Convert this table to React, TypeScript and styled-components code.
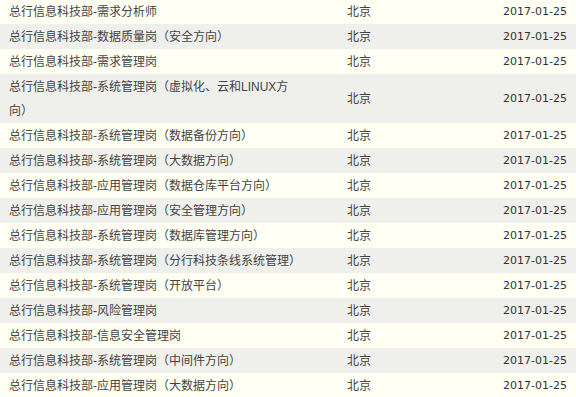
import styled, { createGlobalStyle } from 'styled-components'

const GlobalStyle = createGlobalStyle`
    body {
        margin: 0;
        background: #fffff4;
        font-family: "Liberation Sans", "Noto Sans CJK SC", sans-serif;
        font-size: 12px;
        color: #444;
    }
`

const JobList = styled.div`
    width: 576px;
`

const JobRow = styled.div<{ $odd: boolean }>`
    display: grid;
    grid-template-columns: 338px 1fr 120px;
    align-items: center;
    padding-top: 1px;
    background: ${props => props.$odd ? '#efefeb' : '#fffff4'};
    &:first-child {
        padding-top: 0;
    }
`

const Title = styled.div`
    padding-left: 9px;
    max-width: 290px;
    line-height: 24px;
`

const City = styled.div`
    padding-left: 9px;
    line-height: 24px;
`

const Date = styled.div`
    padding-right: 9px;
    text-align: right;
    line-height: 24px;
    font-family: "DejaVu Sans", sans-serif;
    font-size: 11px;
    color: #333;
`

const jobs = [
    '总行信息科技部-需求分析师',
    '总行信息科技部-数据质量岗（安全方向）',
    '总行信息科技部-需求管理岗',
    '总行信息科技部-系统管理岗（虚拟化、云和LINUX方向）',
    '总行信息科技部-系统管理岗（数据备份方向）',
    '总行信息科技部-系统管理岗（大数据方向）',
    '总行信息科技部-应用管理岗（数据仓库平台方向）',
    '总行信息科技部-应用管理岗（安全管理方向）',
    '总行信息科技部-系统管理岗（数据库管理方向）',
    '总行信息科技部-系统管理岗（分行科技条线系统管理）',
    '总行信息科技部-系统管理岗（开放平台）',
    '总行信息科技部-风险管理岗',
    '总行信息科技部-信息安全管理岗',
    '总行信息科技部-系统管理岗（中间件方向）',
    '总行信息科技部-应用管理岗（大数据方向）',
]

function App() {
    return (
        <>
            <GlobalStyle />
            <JobList>
                {jobs.map((job, i) => (
                    <JobRow key={i} $odd={i % 2 === 1}>
                        <Title>{job}</Title>
                        <City>北京</City>
                        <Date>2017-01-25</Date>
                    </JobRow>
                ))}
            </JobList>
        </>
    )
}

export default App
